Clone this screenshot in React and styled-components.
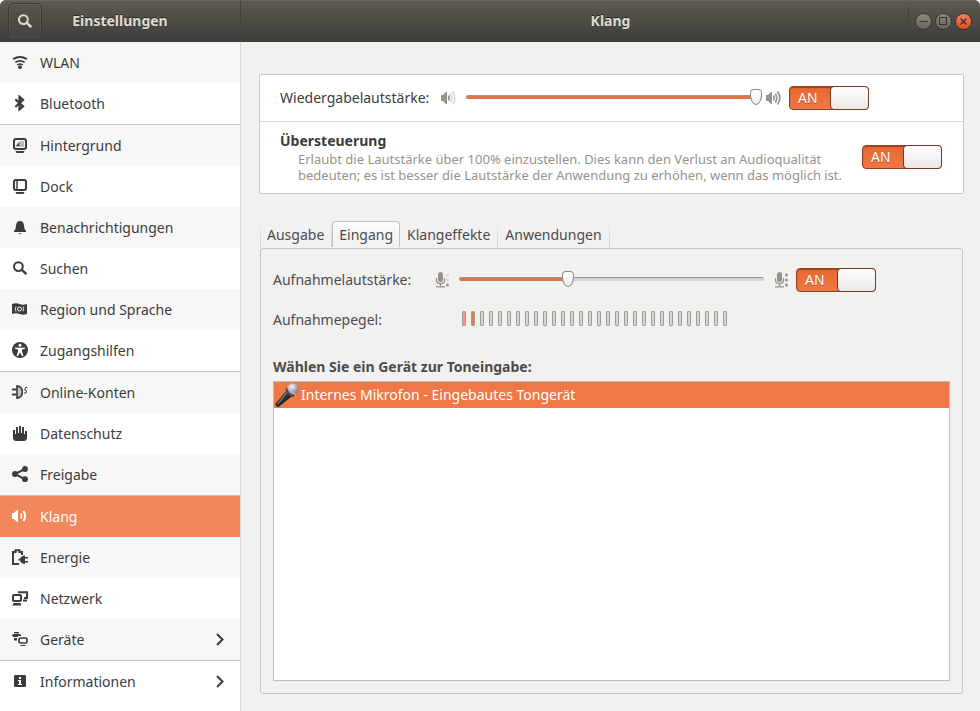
import React, { useState } from "react";
import styled, { createGlobalStyle } from "styled-components";

const GlobalStyle = createGlobalStyle`
  * {
    box-sizing: border-box;
  }
  body {
    margin: 0;
    background: white;
    color: #3c3c3c;
    font-family: "Noto Sans", "Open Sans", sans-serif;
    font-size: 14px;
    line-height: 20px;
  }
  button, input {
    font: inherit;
  }
`;

const Window = styled.div`
  min-height: 100vh;
  display: flex;
  flex-direction: column;
`;

const Header = styled.header`
  height: 42px;
  display: flex;
  border-radius: 6px 6px 0 0;
  background: linear-gradient(#5d5a52, #3d3c37);
  box-shadow: inset 0 1px 0 #69665d;
  color: #dfdbd2;
  text-shadow: 0 -1px 0 rgba(0, 0, 0, 0.5);
`;

const HeaderLeft = styled.div`
  width: 241px;
  flex: none;
  display: grid;
  grid-template-columns: 34px 1fr 34px;
  align-items: center;
  padding: 0 8px;
  border-right: 1px solid #45433d;
`;

const HeaderRight = styled.div`
  flex: 1;
  display: grid;
  grid-template-columns: 72px 1fr 72px;
  align-items: center;
`;

const Title = styled.h1`
  margin: 0;
  font-size: 14px;
  font-weight: bold;
  text-align: center;
`;

const MainTitle = styled(Title)`
  grid-column: 2;
`;

const SearchButton = styled.button`
  height: 36px;
  padding: 0;
  display: flex;
  align-items: center;
  justify-content: center;
  border: 1px solid #3a3934;
  border-radius: 5px;
  background: linear-gradient(#57544d, #45433e);
  box-shadow: inset 0 0 0 1px rgba(255, 255, 255, 0.06);
  color: #dfdbd2;
`;

const WindowButtons = styled.div`
  height: 28px;
  display: flex;
  align-items: center;
  gap: 3px;
  padding-left: 6px;
  border-left: 1px solid #45433d;
`;

const WindowButton = styled.button`
  width: 17px;
  height: 17px;
  padding: 0;
  display: flex;
  align-items: center;
  justify-content: center;
  border: 1px solid #35342f;
  border-radius: 50%;
  background: ${(props) =>
    props.$close
      ? "linear-gradient(#f5805a, #e2501f)"
      : "linear-gradient(#8a8880, #66645d)"};
  color: #35342f;
`;

const Body = styled.div`
  flex: 1;
  display: flex;
`;

const Sidebar = styled.nav`
  width: 241px;
  flex: none;
  background: white;
  border-right: 1px solid #d9d7d5;
`;

const Menu = styled.ul`
  list-style: none;
  margin: 0;
  padding: 0;
`;

const MenuItem = styled.li`
  border-top: ${(props) => (props.$separated ? "1px solid #c6c4c1" : "none")};
  background: ${(props) => (props.$striped ? "#f7f7f7" : "white")};
`;

const MenuLink = styled.a`
  height: 41px;
  display: flex;
  align-items: center;
  gap: 12px;
  padding: 0 16px 0 12px;
  text-decoration: none;
  color: ${(props) => (props.$active ? "white" : "#3c3c3c")};
  background: ${(props) => (props.$active ? "#f4865c" : "transparent")};
`;

const MenuText = styled.span`
  flex: 1;
`;

const Content = styled.main`
  flex: 1;
  min-width: 0;
  display: flex;
  flex-direction: column;
  padding: 32px 16px 17px 18px;
  background: #f2f1f0;
`;

const Card = styled.section`
  border: 1px solid #c9c7c4;
  border-radius: 2px;
  background: white;
`;

const CardRow = styled.div`
  display: flex;
  align-items: center;
  min-height: ${(props) => props.$height}px;
  padding: 0 21px 0 20px;

  & + & {
    padding-bottom: 2px;
    border-top: 1px solid #dbd9d7;
  }
`;

const VolumeLabel = styled.label`
  flex: 0 0 ${(props) => props.$width}px;
  white-space: nowrap;
`;

const Range = styled.input`
  flex: 0 1 ${(props) => props.$width}px;
  min-width: 60px;
  height: 18px;
  margin: ${(props) => props.$margin};
  appearance: none;
  background: transparent;

  &::-webkit-slider-runnable-track {
    height: 4px;
    border-top: 1px solid #9b9790;
    border-radius: 2px;
    background: linear-gradient(
      to right,
      #e0754b var(--fill),
      #d6d4d0 var(--fill)
    );
  }

  &::-webkit-slider-thumb {
    appearance: none;
    width: 12px;
    height: 16px;
    margin-top: -7px;
    border: 1px solid #8f8c86;
    border-radius: 4px 4px 6px 6px / 4px 4px 10px 10px;
    background: linear-gradient(white, #ececeb);
  }
`;

const SwitchBox = styled.label`
  position: relative;
  flex: none;
  width: 80px;
  height: 24px;
  display: flex;
  margin-left: ${(props) => props.$gap};
  border: 1px solid #8e4224;
  border-radius: 4px;
  background: linear-gradient(#e5682f, #f07746);
  box-shadow: inset 0 1px 1px rgba(90, 30, 0, 0.5);
  color: white;
  line-height: 22px;
`;

const SwitchInput = styled.input`
  position: absolute;
  inset: 0;
  width: 100%;
  height: 100%;
  margin: 0;
  opacity: 0;
`;

const SwitchText = styled.span`
  flex: 1;
  padding-left: 8px;
  order: ${(props) => (props.$on ? 0 : 1)};
  text-shadow: 0 1px 0 rgba(90, 30, 0, 0.5);
`;

const Knob = styled.span`
  width: 39px;
  margin: -1px;
  border: 1px solid #7a3a20;
  border-radius: 4px;
  background: linear-gradient(white, #e9e8e6);
`;

const Boost = styled.div`
  flex: 1;
`;

const BoostTitle = styled.h2`
  margin: 0;
  font-size: 14px;
  font-weight: bold;
  line-height: 20px;
`;

const BoostText = styled.p`
  margin: 0;
  padding-left: 18px;
  font-size: 13px;
  line-height: 16px;
  color: #96938d;
`;

const Tabs = styled.div`
  display: flex;
  margin: 27px 0 0 1px;
  padding-bottom: 1px;
`;

const Tab = styled.button`
  height: 26px;
  padding: 1px 7px 0;
  border: 1px solid transparent;
  border-width: 0 1px 0 0;
  border-image: linear-gradient(transparent, #cfcdca) 1;
  background: transparent;
  color: #4c4c4c;

  &:first-child {
    padding-left: 6px;
    border-left-width: 1px;
  }

  ${(props) =>
    props.$active &&
    `
    padding: 0 6px;
    border: 1px solid #c4c2bf;
    border-bottom: 0;
    border-image: none;
    border-radius: 4px 4px 0 0;
    background: linear-gradient(#fbfbfb, #f2f1f0);
  `}
`;

const Panel = styled.section`
  flex: 1;
  display: flex;
  flex-direction: column;
  margin-left: 1px;
  margin-right: 1px;
  padding: 19px 12px 12px;
  border: 1px solid #c6c4c1;
  border-radius: 3px;
  color: #4c4c4c;
`;

const PanelRow = styled.div`
  display: flex;
  align-items: center;
`;

const LevelRow = styled(PanelRow)`
  height: 19px;
  margin-top: 17px;
`;

const LevelLabel = styled.span`
  width: 189px;
  padding-top: 2px;
`;

const Level = styled.div`
  display: flex;
  gap: 5px;
`;

const LevelBar = styled.span`
  width: 4px;
  height: 15px;
  border: 1px solid #9f9c94;
  border-radius: 1px;
  background: ${(props) => props.$color};
`;

const DeviceTitle = styled.h2`
  margin: 29px 0 4px;
  font-size: 14px;
  font-weight: bold;
  line-height: 20px;
`;

const DeviceList = styled.ul`
  flex: 1;
  list-style: none;
  margin: 0;
  padding: 0;
  border: 1px solid #c0bebb;
  background: white;
`;

const Device = styled.li`
  height: 26px;
  display: flex;
  align-items: center;
  gap: 1px;
  background: #f07746;
  color: white;
`;

const SideSvg = styled.svg`
  flex: none;
  width: 16px;
  height: 17px;
`;

const SmallSvg = styled.svg`
  flex: none;
  width: 16px;
  height: 16px;
  color: #96938c;
`;

const DrawSvg = styled.svg`
  flex: none;
`;

const stroke = { fill: "none", stroke: "currentColor" };

const icons = {
  wifi: (
    <>
      <path d="M1.2 5.2Q8 .7 14.8 5.2" {...stroke} strokeWidth="2" />
      <path d="M3.4 8.3Q8 5.4 12.6 8.3" {...stroke} strokeWidth="1.8" />
      <path d="M5.3 11Q8 9 10.7 11" {...stroke} strokeWidth="1.6" />
      <circle cx="8" cy="13.2" r="1.9" fill="currentColor" />
    </>
  ),
  bluetooth: (
    <path d="M3.3 4.2L11 11.3L7.5 14.4V1.8L11 4.8L3.3 12" {...stroke} strokeWidth="2.2" />
  ),
  background: (
    <>
      <rect x="2" y="2" width="12" height="10" rx="2" {...stroke} strokeWidth="2" />
      <path d="M8 4h4v6H4V9h4z" fill="#bbb" />
      <path d="M4 9l3.5-4.5V9z" fill="currentColor" />
      <path d="M3.5 14h9l-1 2h-7z" fill="currentColor" />
    </>
  ),
  dock: (
    <>
      <rect x="2" y="2" width="12" height="10" rx="2" {...stroke} strokeWidth="2" />
      <path d="M5 3v8" {...stroke} strokeWidth="1.4" />
      <path d="M3.5 14h9l-1 2h-7z" fill="currentColor" />
    </>
  ),
  bell: (
    <path d="M2 13v-1l1.5-2L4.3 5Q5 2 8 2t3.7 3l.8 5 1.5 2v1zM6.5 14h3L8 15.2z" fill="currentColor" />
  ),
  search: (
    <>
      <circle cx="6.4" cy="6.6" r="4.4" {...stroke} strokeWidth="2" />
      <path d="M9.8 9.8L14.4 14.2" {...stroke} strokeWidth="2.4" />
    </>
  ),
  region: (
    <>
      <path d="M0 3Q4 1.5 7.5 3T15 3v10Q11 14.5 7.5 13T0 13z" fill="currentColor" />
      <circle cx="7.5" cy="8" r="2" fill="none" stroke="#f7f7f7" />
      <path d="M4 5.5Q2.5 8 4 10.5M11 5.5Q12.5 8 11 10.5" fill="none" stroke="#f7f7f7" strokeWidth="0.8" />
    </>
  ),
  access: (
    <>
      <circle cx="8" cy="8" r="8" fill="currentColor" />
      <circle cx="8" cy="3.3" r="1.5" fill="white" />
      <path d="M3 5.5l3.3.2h3.4L13 5.5v1.3l-3 .7v2l1.5 4.3-1.3.5L8 10.5l-2.2 3.8-1.3-.5L6 9.5v-2l-3-.7z" fill="white" />
    </>
  ),
  online: (
    <>
      <path d="M6 1.5Q10.5 3 10.5 8T6 14.5z" fill="#c4c4c4" />
      <path d="M5 1v14M5.5 2Q10.3 3 10.3 8T5.5 14" {...stroke} strokeWidth="1.7" />
      <path d="M0 5.5h4M0 10.5h4" {...stroke} strokeWidth="2" />
      <path d="M15.5 3.5h-2L12.6 6l2 1-.6 2h-2" {...stroke} strokeWidth="1" />
    </>
  ),
  hand: (
    <path d="M1 5h2v4h1V2h2v6h1V1h2v7h1V2h2v7h1V6h2v7q0 3-3 3H4q-3 0-3-3z" fill="currentColor" />
  ),
  share: (
    <>
      <path d="M13 3L3 8L13 13.3" {...stroke} strokeWidth="2" />
      <circle cx="3" cy="8" r="2.9" fill="currentColor" />
      <circle cx="13" cy="3" r="2.9" fill="currentColor" />
      <circle cx="13" cy="13.2" r="2.9" fill="currentColor" />
    </>
  ),
  sound: (
    <>
      <path d="M0 5h2l3-3h1v12H5l-3-3H0z" fill="currentColor" />
      <path d="M9 5.3Q10.3 8 9 10.7" {...stroke} strokeWidth="1.7" />
      <path d="M11.5 3Q14.6 8 11.5 13" {...stroke} strokeWidth="2" />
    </>
  ),
  power: (
    <>
      <path d="M7 15H1V3h2.5V1.3h4V3H10v3" {...stroke} strokeWidth="2" />
      <path d="M6.5 9.8H8q1-3 5-3.3V8h3v1.5h-3V12h3v1.5h-3V15q-4-.3-5-3.500H6.500z" fill="currentColor" />
    </>
  ),
  network: (
    <>
      <path d="M6 2.3h9V8h-3" {...stroke} strokeWidth="2" />
      <path d="M11 9.500h4v2h-4zM1.500 13h7l1 2.500h-9z" fill="currentColor" />
      <rect x="1" y="5" width="8" height="6" rx="1" {...stroke} strokeWidth="2" />
    </>
  ),
  devices: (
    <>
      <path d="M2 1h5v1.2H2zM0 3.5q5-1.500 9 0V5H6v1H1zM2 7h3v2.500H2z" fill="currentColor" />
      <rect x="7" y="7" width="8" height="5" rx="1.5" {...stroke} strokeWidth="1.7" />
      <path d="M8.500 14h5v1h-5z" fill="currentColor" />
    </>
  ),
  info: (
    <>
      <rect x="2" y="2" width="12" height="12" rx="1" fill="currentColor" />
      <path d="M7 4h2v2H7zM6 7h3v4h1v1H6v-1h1V8H6z" fill="white" />
    </>
  ),
};

const menu = [
  { icon: "wifi", text: "WLAN" },
  { icon: "bluetooth", text: "Bluetooth" },
  { icon: "background", text: "Hintergrund", separated: true },
  { icon: "dock", text: "Dock" },
  { icon: "bell", text: "Benachrichtigungen" },
  { icon: "search", text: "Suchen" },
  { icon: "region", text: "Region und Sprache" },
  { icon: "access", text: "Zugangshilfen" },
  { icon: "online", text: "Online-Konten", separated: true },
  { icon: "hand", text: "Datenschutz" },
  { icon: "share", text: "Freigabe" },
  { icon: "sound", text: "Klang", separated: true },
  { icon: "power", text: "Energie" },
  { icon: "network", text: "Netzwerk" },
  { icon: "devices", text: "Geräte", more: true },
  { icon: "info", text: "Informationen", separated: true, more: true },
];

const tabs = ["Ausgabe", "Eingang", "Klangeffekte", "Anwendungen"];

const SideIcon = ({ name }) => (
  <SideSvg viewBox="0 0 16 17" aria-hidden="true">
    {icons[name]}
  </SideSvg>
);

const SpeakerIcon = ({ muted }) => (
  <SmallSvg viewBox="0 0 16 16" aria-hidden="true">
    <path d="M0 5h2l3-3h1v12H5l-3-3H0z" fill="currentColor" />
    <path d="M7.5 5.5Q8.8 8 7.5 10.5" {...stroke} strokeWidth="1.7" />
    <g {...stroke} strokeWidth="1.7" opacity={muted ? 0.35 : 1}>
      <path d="M9.3 3.5Q12.3 8 9.3 12.5" />
      <path d="M11.5 1.5Q16.2 8 11.5 14.5" />
    </g>
  </SmallSvg>
);

const MicIcon = ({ muted }) => (
  <SmallSvg viewBox="0 0 16 16" aria-hidden="true">
    <rect x="3" y="0" width="5" height="10" rx="2.5" fill="currentColor" />
    <path d="M1.5 6v2.5q0 3 4 3t4-3V6M5.5 12v3M1 14.8h9" {...stroke} strokeWidth="1.3" />
    <circle cx="12.5" cy="3" r="1.5" fill="currentColor" opacity={muted ? 0.25 : 1} />
    <circle cx="12.5" cy="8" r="1.5" fill="currentColor" opacity={muted ? 0.25 : 1} />
    <circle cx="12.5" cy="13" r="1.5" fill="currentColor" />
  </SmallSvg>
);

const DeviceIcon = () => (
  <DrawSvg width="26" height="26" viewBox="0 0 26 26" aria-hidden="true">
    <defs>
      <radialGradient id="head" cx="0.4" cy="0.3" r="0.7">
        <stop offset="0" stopColor="#f4f4f4" />
        <stop offset="1" stopColor="#77777a" />
      </radialGradient>
      <linearGradient id="handle" x1="0" y1="0" x2="1" y2="1">
        <stop offset="0.3" stopColor="#55565a" />
        <stop offset="0.7" stopColor="#141414" />
      </linearGradient>
    </defs>
    <path d="M12 9L17.5 14.5L4.5 25Q2 25 1 22z" fill="url(#handle)" />
    <path d="M13 10L4 22" stroke="#85868a" strokeWidth="1" />
    <circle cx="19" cy="7" r="5.7" fill="url(#head)" />
    <path d="M13 5.5Q14 12 21 13l-2 2.2Q12.5 13.5 11.5 7.5z" fill="#4a4a4c" />
    <path d="M13.8 4.5Q15 10.5 22 12" fill="none" stroke="#c6c6c6" strokeWidth="1" />
  </DrawSvg>
);

const Chevron = () => (
  <DrawSvg width="8" height="13" viewBox="0 0 8 13" aria-hidden="true">
    <path d="M1 1L6.5 6.5L1 12" {...stroke} strokeWidth="2" />
  </DrawSvg>
);

const Switch = ({ label, gap }) => {
  const [on, setOn] = useState(true);

  return (
    <SwitchBox $gap={gap}>
      <SwitchInput
        type="checkbox"
        role="switch"
        aria-label={label}
        checked={on}
        onChange={(e) => setOn(e.target.checked)}
      />
      <SwitchText $on={on}>{on ? "AN" : "AUS"}</SwitchText>
      <Knob />
    </SwitchBox>
  );
};

const Slider = ({ id, start, width, margin }) => {
  const [value, setValue] = useState(start);

  return (
    <Range
      id={id}
      type="range"
      min="0"
      max="100"
      value={value}
      $width={width}
      $margin={margin}
      style={{ "--fill": `${value}%` }}
      onChange={(e) => setValue(e.target.value)}
    />
  );
};

const levelColor = (i) => {
  if (i === 0) return "#e8a186";
  if (i === 1) return "#f07746";
  return "#d9d7cf";
};

const App = () => {
  const [active, setActive] = useState("Klang");
  const [tab, setTab] = useState("Eingang");

  return (
    <Window>
      <GlobalStyle />
      <Header>
        <HeaderLeft>
          <SearchButton aria-label="Suchen">
            <SideIcon name="search" />
          </SearchButton>
          <Title>Einstellungen</Title>
        </HeaderLeft>
        <HeaderRight>
          <MainTitle>Klang</MainTitle>
          <WindowButtons>
            <WindowButton aria-label="Minimieren">
              <DrawSvg width="15" height="15" viewBox="0 0 15 15">
                <path d="M3.5 7.5h8" {...stroke} />
              </DrawSvg>
            </WindowButton>
            <WindowButton aria-label="Maximieren">
              <DrawSvg width="15" height="15" viewBox="0 0 15 15">
                <rect x="3.5" y="3.5" width="7" height="7" {...stroke} />
              </DrawSvg>
            </WindowButton>
            <WindowButton $close aria-label="Schließen">
              <DrawSvg width="15" height="15" viewBox="0 0 15 15">
                <path d="M4.5 4.5l6 6M10.5 4.5l-6 6" {...stroke} strokeWidth="1.3" />
              </DrawSvg>
            </WindowButton>
          </WindowButtons>
        </HeaderRight>
      </Header>
      <Body>
        <Sidebar>
          <Menu>
            {menu.map((item, i) => (
              <MenuItem key={item.text} $separated={item.separated} $striped={i % 2 === 0}>
                <MenuLink
                  href="#"
                  $active={item.text === active}
                  onClick={() => setActive(item.text)}
                >
                  <SideIcon name={item.icon} />
                  <MenuText>{item.text}</MenuText>
                  {item.more && <Chevron />}
                </MenuLink>
              </MenuItem>
            ))}
          </Menu>
        </Sidebar>
        <Content>
          <Card>
            <CardRow $height={46}>
              <VolumeLabel htmlFor="output" $width={161}>
                Wiedergabelautstärke:
              </VolumeLabel>
              <SpeakerIcon muted />
              <Slider id="output" start={100} width={296} margin="0 4px 2px 9px" />
              <SpeakerIcon />
              <Switch label="Wiedergabe" gap="7px" />
            </CardRow>
            <CardRow $height={72}>
              <Boost>
                <BoostTitle>Übersteuerung</BoostTitle>
                <BoostText>
                  Erlaubt die Lautstärke über 100% einzustellen. Dies kann den
                  Verlust an Audioqualität bedeuten; es ist besser die Lautstärke
                  der Anwendung zu erhöhen, wenn das möglich ist.
                </BoostText>
              </Boost>
              <Switch label="Übersteuerung" gap="0" />
            </CardRow>
          </Card>
          <Tabs role="tablist">
            {tabs.map((name) => (
              <Tab
                key={name}
                role="tab"
                aria-selected={name === tab}
                $active={name === tab}
                onClick={() => setTab(name)}
              >
                {name}
              </Tab>
            ))}
          </Tabs>
          <Panel>
            <PanelRow>
              <VolumeLabel htmlFor="input" $width={162}>
                Aufnahmelautstärke:
              </VolumeLabel>
              <MicIcon muted />
              <Slider id="input" start={35} width={305} margin="0 10px 2px 8px" />
              <MicIcon />
              <Switch label="Aufnahme" gap="6px" />
            </PanelRow>
            <LevelRow>
              <LevelLabel>Aufnahmepegel:</LevelLabel>
              <Level>
                {Array.from({ length: 30 }, (_, i) => (
                  <LevelBar key={i} $color={levelColor(i)} />
                ))}
              </Level>
            </LevelRow>
            <DeviceTitle>Wählen Sie ein Gerät zur Toneingabe:</DeviceTitle>
            <DeviceList role="listbox" aria-label="Eingabegeräte">
              <Device role="option" aria-selected="true">
                <DeviceIcon />
                Internes Mikrofon - Eingebautes Tongerät
              </Device>
            </DeviceList>
          </Panel>
        </Content>
      </Body>
    </Window>
  );
};

export default App;
